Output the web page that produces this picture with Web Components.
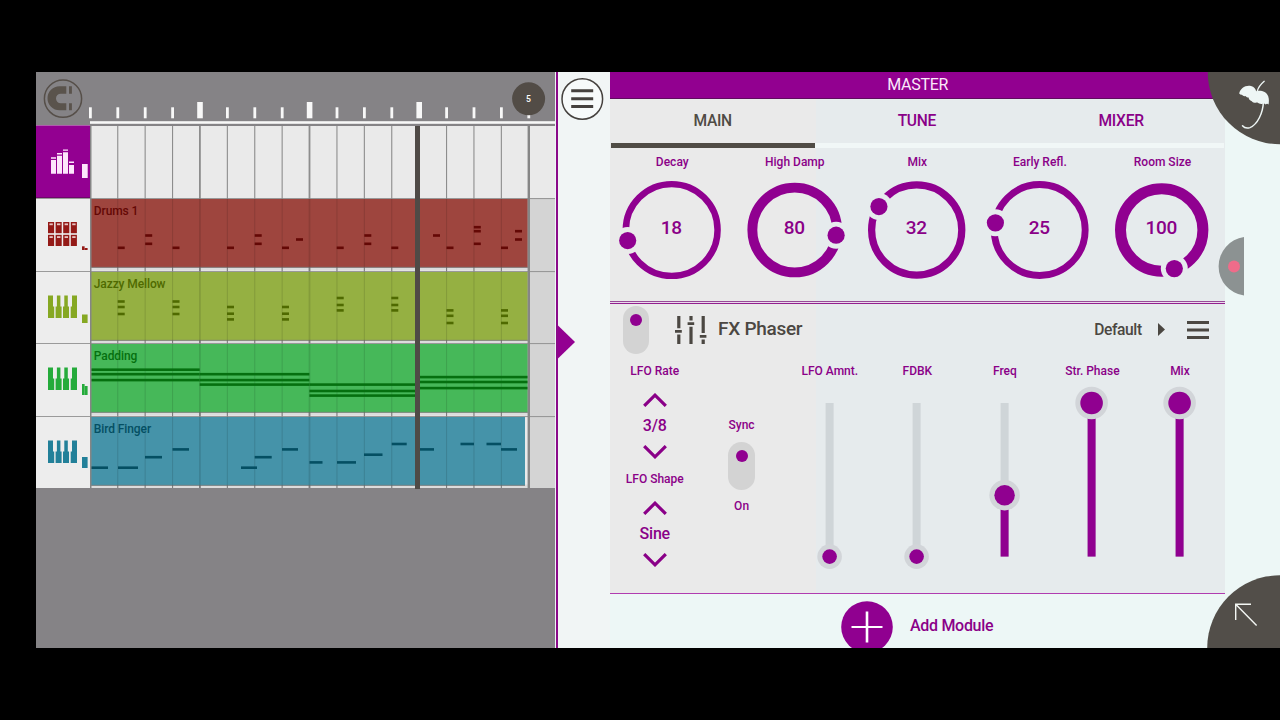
<!DOCTYPE html>
<html lang="en">
<head>
<meta charset="utf-8">
<title>Sequencer</title>
<style>
  body {
    margin: 0;
    background: #000;
    font-family: Roboto, "Liberation Sans", sans-serif;
    overflow: hidden;
  }
</style>
</head>
<body>
<daw-app></daw-app>

<script>
const BEAT = 27.4;
const ROW_HEIGHT = 72.4;

// Notes are [x, y, width] in lane pixels
const at = (x, ys, w = 7) => ys.map(y => [x, y, w]);

const TRACKS = [
  {
    name: 'Drums 1', icon: 'pads', color: '#9e453e', ink: '#640805', accent: '#941a17', end: 437.8,
    meter: [[0, 48.3, 2.6, 3.7], [2.6, 50, 3, 2]],
    notes: [
      ...at(27.7, [49.8]), ...at(55.2, [37.5, 45.8]), ...at(82.5, [49.8]), ...at(137, [49.8]),
      ...at(164.7, [37.5, 45.8]), ...at(192, [49.8]), ...at(206, [41.5]), ...at(246.7, [49.8]),
      ...at(274.3, [37.5, 45.8]), ...at(301.3, [49.8]), ...at(343, [37.5]), ...at(356.5, [49.8]),
      ...at(383.8, [29.2, 33.2, 45.8]), ...at(411, [49.8]), ...at(425, [33.2, 41.5])
    ]
  },
  {
    name: 'Jazzy Mellow', icon: 'keys', color: '#95b042', ink: '#4f6a00', accent: '#86a823', end: 437.8,
    meter: [[0, 43.5, 5.6, 8.5]],
    notes: [
      ...at(27.7, [30.5, 36, 43]), ...at(82.5, [30.5, 36, 43]),
      ...at(137, [36, 42.7, 48.4]), ...at(192, [36, 42.7, 48.4]),
      ...at(246.7, [27, 34, 39.4]), ...at(301.3, [27, 34, 39.4]),
      ...at(356.5, [39.4, 44.8, 52]), ...at(411, [39.4, 44.8, 52])
    ]
  },
  {
    name: 'Padding', icon: 'keys', color: '#46b859', ink: '#05700f', accent: '#25ab3b', end: 437.8,
    meter: [[0, 41, 2.6, 11], [2.6, 43, 3, 9]],
    notes: [
      ...at(0, [26.7, 31.2, 37.1], 109.7), ...at(109.7, [31.2, 37.1, 41.6], 109.7),
      ...at(219.4, [41.6, 48, 52.6], 106), ...at(330, [34.1, 39, 45.1], 107.8)
    ]
  },
  {
    name: 'Bird Finger', icon: 'keys', color: '#4593a9', ink: '#044f63', accent: '#228099', end: 435,
    meter: [[0, 41, 5.6, 11]],
    notes: [
      [0, 51.7, 18], [28, 51.7, 20], [55, 41.2, 17], [82.5, 33.4, 16.5], [151, 51.7, 16],
      [164.7, 41.2, 17], [192, 33.4, 16], [219.5, 46.4, 13], [247, 46.4, 19], [274, 38.7, 18.5],
      [301.7, 28, 15], [329.5, 33.4, 14.5], [370.5, 28, 13.5], [396.5, 28, 14.5], [411, 33.4, 16]
    ]
  }
];

const ICONS = {
  mixer: `
    <path fill="#fde6fb" d="M15 34h5v13.7h-5zM21 29.7h5v18h-5zM27 26.3h5v21.4h-5zM33 39h5v8.7h-5zM15 31.3h5v1.4h-5zM21 27h5v1.4h-5zM27 23.4h5v1.4h-5zM33 35.6h5v1.4h-5z"/>`,
  pads: [0, 1].map(row => [0, 1, 2, 3].map(col => {
    const x = 12 + col * 7.6;
    const y = 24 + row * 12.8;
    return `<rect x="${x}" y="${y}" width="6.1" height="11.2"/><rect x="${x + 1.4}" y="${y + 1.4}" width="3.4" height="1.8" fill="#e8c4c2"/>`;
  }).join('')).join(''),
  keys: '<path d="M12 24.5h5v11h1.2v11.6H12zM20.9 24.5h3.5v11h1.2v11.6h-6v-11.6h1.3zM28.3 24.5h3.5v11H33v11.6h-6v-11.6h1.3zM36 24.5h5v22.6h-6.3v-11.6H36z"/>'
};

class DawComponent extends HTMLElement {
  constructor() {
    super();
    this.attachShadow({ mode: 'open' });
  }

  connectedCallback() {
    this.shadowRoot.innerHTML = this.template();
  }
}

/** Timeline ruler: short tick per beat, tall tick per bar, loop end marker */
class TimeRuler extends DawComponent {
  template() {
    let ticks = '';
    for (let i = 0; i <= 16; i++) {
      const x = 54.4 + i * BEAT;
      const bar = i % 4 === 0 && i > 0 && i < 16;
      ticks += bar
        ? `<rect x="${x - 2.8}" y="30" width="5.6" height="16.3"/>`
        : `<rect x="${x - 1.4}" y="35.3" width="2.8" height="11"/>`;
    }
    return `
      <style>
        :host { display: block; height: 54px; }
        svg { display: block; }
      </style>
      <svg width="519" height="54">
        <g fill="#f8f8f8">${ticks}<rect x="54" y="49.2" width="465" height="2.6"/></g>
        <rect x="0" y="53" width="54" height="1" fill="#b05cae"/>
        <circle cx="27" cy="26.7" r="18.6" fill="none" stroke="#564f49" stroke-width="1.5"/>
        <path fill="#5a534c" d="M30.3 14.3v7.4h-5.5a4.8 4.8 0 0 0 0 9.6h5.5v7H23.5a12 12 0 0 1 0-24zM33 14.3h2.9v7.4H33zM33 31.3h2.9v7H33z"/>
        <circle cx="492.6" cy="26.8" r="16.5" fill="#524c46"/>
        <text x="492.4" y="29.7" text-anchor="middle" font-size="8.6" font-weight="500" fill="#fff">5</text>
      </svg>`;
  }
}

class TrackRow extends DawComponent {
  template() {
    const track = this.track;
    let lines = '';
    for (let i = 1; i < 16; i++) {
      const bar = i % 4 === 0;
      lines += `<rect x="${i * BEAT + (bar ? -0.6 : -0.2)}" y="0" width="${bar ? 1.8 : 1.1}" height="73"/>`;
    }
    const clip = track ? `
      <rect x="439" y="0" width="26" height="73" fill="#d4d4d4"/>
      <rect x="1" y="68.5" width="438" height="4" fill="#dcdcdc"/>` : '';
    const clipBody = track ? `
      <rect x="1" y="1" width="${track.end - 1}" height="68.5" fill="${track.color}"/>
      <rect x="1" y="68.8" width="${track.end - 1}" height="1.2" fill="#777" opacity="0.7"/>
      <g fill="#000" opacity="0.11">${lines}</g>
      <g fill="${track.ink}">${track.notes.map(([x, y, w]) => `<rect x="${x}" y="${y - 1.3}" width="${w}" height="2.6"/>`).join('')}</g>
      <text x="3.8" y="17.2" font-size="12" font-weight="500" letter-spacing="-0.1" fill="${track.ink}">${track.name}</text>` : '';
    const meter = track ? track.meter : [[0, 38, 5.7, 14]];

    return `
      <style>
        :host { display: flex; height: ${ROW_HEIGHT}px; }
        svg { display: block; flex: none; overflow: hidden; }
        .head { background: ${track ? '#ededed' : '#930091'}; }
        .lane { background: #eaeaea; }
      </style>
      <svg class="head" width="54" height="${ROW_HEIGHT}" fill="${track ? track.accent : '#fde6fb'}">
        ${ICONS[track ? track.icon : 'mixer']}
        <g transform="translate(46 0)">${meter.map(([x, y, w, h]) => `<rect x="${x}" y="${y}" width="${w}" height="${h}"/>`).join('')}</g>
        ${track ? '<rect width="54" height="1" fill="#9a9a9a"/>' : '<rect y="71.4" width="54" height="1" fill="#55104f"/>'}
      </svg>
      <svg class="lane" width="465" height="${ROW_HEIGHT}">
        ${clip}
        <g fill="#8d8d8d">${lines}</g>
        ${track ? '<rect width="465" height="1.1" fill="#989898"/>' : ''}
        ${clipBody}
        <rect x="0" y="0" width="1.5" height="73" fill="#858585"/>
        <rect x="437.6" y="0" width="2.4" height="73" fill="#868686"/>
      </svg>`;
  }
}

class SongEditor extends DawComponent {
  template() {
    return `
      <style>
        :host {
          display: block;
          position: relative;
          width: 519px;
          background: #858386;
        }
        .playhead {
          position: absolute;
          left: 379px;
          top: 54px;
          width: 5px;
          height: 362.5px;
          background: #4f4a46;
        }
      </style>
      <time-ruler></time-ruler>
      <div id="tracks"></div>
      <div class="playhead"></div>`;
  }

  connectedCallback() {
    super.connectedCallback();
    const list = this.shadowRoot.getElementById('tracks');
    [null, ...TRACKS].forEach(track => {
      const row = document.createElement('track-row');
      row.track = track;
      list.appendChild(row);
    });
  }
}

class SideRail extends DawComponent {
  template() {
    return `
      <style>
        :host {
          display: block;
          box-sizing: border-box;
          width: 54px;
          border-left: 2px solid #8b0a89;
          background: #f1f5f5;
          margin-left: 1px;
        }
        svg { display: block; }
      </style>
      <svg width="52" height="576">
        <circle cx="24.3" cy="27" r="20.3" fill="#f7fafa" stroke="#45413e" stroke-width="1.5"/>
        <path fill="#45413e" d="M13.2 17.3h22v3H13.2zM13.2 25.2h22v3H13.2zM13.2 33h22v3H13.2z"/>
        <path fill="#930091" d="M-1 252.5L17 270L-1 287.5z"/>
      </svg>`;
  }
}

/** Round dial, the ring gets thicker and smaller as the value goes up */
class DialKnob extends DawComponent {
  template() {
    const value = Number(this.getAttribute('value'));
    const stroke = 5.5 + value * 0.055;
    const radius = 46.9 - value * 0.057;
    const angle = (18.3 + value * 3.236) * Math.PI / 180;
    const x = 51.7 - Math.sin(angle) * (radius - 0.6);
    const y = 52 + Math.cos(angle) * (radius - 0.6);

    return `
      <style>
        :host {
          display: flex;
          flex-direction: column;
          align-items: center;
          color: #8a0088;
          font-weight: 500;
        }
        .label { font-size: 12px; line-height: 14px; }
        svg { display: block; margin-top: 8.6px; overflow: visible; }
      </style>
      <div class="label"><slot></slot></div>
      <svg width="104" height="104">
        <mask id="cut">
          <rect x="-5" y="-5" width="114" height="114" fill="#fff"/>
          <circle cx="${x}" cy="${y}" r="13.5" fill="#000"/>
        </mask>
        <circle cx="51.7" cy="52" r="${radius}" fill="none" stroke="#900090" stroke-width="${stroke}" mask="url(#cut)"/>
        <circle cx="${x}" cy="${y}" r="8.6" fill="#900090"/>
        <text x="51.2" y="56.4" text-anchor="middle" font-size="19" letter-spacing="-0.4" fill="#8a0088">${value}</text>
      </svg>`;
  }
}

class PillToggle extends DawComponent {
  template() {
    return `
      <style>
        :host {
          display: block;
          box-sizing: border-box;
          width: 26.6px;
          height: 48px;
          border-radius: 13.3px;
          background: #d3d3d3;
          padding: 7.6px 7.3px;
        }
        i {
          display: block;
          width: 12px;
          height: 12px;
          border-radius: 50%;
          background: #900090;
        }
      </style>
      <i></i>`;
  }
}

class ValueStepper extends DawComponent {
  template() {
    return `
      <style>
        :host {
          display: flex;
          flex-direction: column;
          align-items: center;
          height: 108.2px;
          color: #8a0088;
          font-weight: 500;
        }
        .label { font-size: 12px; line-height: 14px; }
        .value { font-size: 16px; line-height: 20px; margin: 8.4px 0 9.6px; letter-spacing: -0.2px; }
        svg { display: block; fill: none; stroke: #8a0088; stroke-width: 3.2; }
        .up { margin-top: 15.2px; }
      </style>
      <div class="label"><slot></slot></div>
      <svg class="up" width="24" height="14"><path d="M1.2 12.9L12 2.2L22.8 12.9"/></svg>
      <div class="value">${this.getAttribute('value')}</div>
      <svg width="24" height="14"><path d="M1.2 1.1L12 11.8L22.8 1.1"/></svg>`;
  }
}

class FaderSlider extends DawComponent {
  template() {
    const value = Number(this.getAttribute('value'));
    const grow = Math.cbrt(value) * 4;
    const y = 17 + (1 - value) * 153.6;

    return `
      <style>
        :host {
          display: flex;
          flex-direction: column;
          align-items: center;
          color: #8a0088;
        }
        .label { font-size: 12px; font-weight: 500; line-height: 14px; }
        svg { display: block; margin-top: 8px; }
      </style>
      <div class="label"><slot></slot></div>
      <svg width="40" height="190">
        <rect x="15.6" y="17" width="8" height="153.6" fill="#cfd5d8"/>
        <rect x="15.6" y="${y}" width="8" height="${170.6 - y}" fill="#900090"/>
        <circle cx="19.6" cy="${y}" r="${12.3 + grow}" fill="#d2d5d9"/>
        <circle cx="19.6" cy="${y}" r="${7.3 + grow}" fill="#900090"/>
      </svg>`;
  }
}

class TabStrip extends DawComponent {
  template() {
    return `
      <style>
        :host {
          display: grid;
          grid-template-columns: repeat(3, 1fr);
          height: 49px;
        }
        ::slotted(span) {
          box-sizing: border-box;
          border-bottom: 5px solid #f1f7f7;
          color: #8a0088;
          font-size: 15.6px;
          font-weight: 500;
          letter-spacing: -0.3px;
          line-height: 44px;
          padding-right: 1px;
          text-align: center;
        }
        ::slotted(.active) {
          border-bottom-color: #504c45;
          color: #504c45;
        }
      </style>
      <slot></slot>`;
  }
}

class FxModule extends DawComponent {
  template() {
    return `
      <style>
        :host { display: block; box-sizing: border-box; height: 289px; padding-top: 2px; }
        header {
          display: flex;
          align-items: center;
          height: 48px;
          padding: 0 15px 0 11.5px;
          color: #4b4742;
          font-weight: 500;
        }
        svg { display: block; flex: none; }
        .icon { margin: 0 11.5px 0 25.5px; }
        h2 { flex: 1; margin: 0; font-size: 19px; font-weight: 500; letter-spacing: -0.3px; line-height: 46px; height: 48px; }
        .preset { font-size: 15.6px; letter-spacing: -0.4px; line-height: 48px; height: 48px; }
        .next { margin: -1px 22px 0 16px; }
        .menu { margin-top: -0.6px; }
        .params {
          display: grid;
          grid-template-columns: repeat(7, 1fr);
          padding-top: 10px;
        }
        .sync {
          display: flex;
          flex-direction: column;
          align-items: center;
          padding: 54px 1.4px 0 0;
          color: #8a0088;
          font-size: 12px;
          font-weight: 500;
          line-height: 14px;
        }
        .sync pill-toggle { margin: 10px 0 9px; }
      </style>
      <header>
        <pill-toggle></pill-toggle>
        <svg class="icon" width="32" height="28" fill="#4b4742">
          <path d="M2.2 0h3.2v12.3H2.2zM0 14h6.8v2.8H0zM2.2 18.6h3.2V28H2.2zM14.4 0h3.2v4.4h-3.2zM12.6 6.2h6.6v2.8h-6.6zM14.4 10.8h3.2V28h-3.2zM26.6 0h3.2v17h-3.2zM24.8 19h6.6v2.8h-6.6zM26.6 23.6h3.2V28h-3.2z"/>
        </svg>
        <h2><slot name="title"></slot></h2>
        <span class="preset"><slot name="preset"></slot></span>
        <svg class="next" width="7" height="13" fill="#4b4742"><path d="M0 0l7 6.5L0 13z"/></svg>
        <svg class="menu" width="22" height="18" fill="#4b4742"><path d="M0 0h22v3H0zM0 7.5h22v3H0zM0 15h22v3H0z"/></svg>
      </header>
      <div class="params">
        <div>
          <value-stepper value="3/8">LFO Rate</value-stepper>
          <value-stepper value="Sine">LFO Shape</value-stepper>
        </div>
        <div class="sync">Sync<pill-toggle></pill-toggle>On</div>
        <fader-slider value="0">LFO Amnt.</fader-slider>
        <fader-slider value="0">FDBK</fader-slider>
        <fader-slider value="0.4">Freq</fader-slider>
        <fader-slider value="1">Str. Phase</fader-slider>
        <fader-slider value="1">Mix</fader-slider>
      </div>`;
  }
}

class ModuleRack extends DawComponent {
  template() {
    return `
      <style>
        :host { display: block; width: 615.3px; }
        h1 {
          box-sizing: border-box;
          height: 27px;
          margin: 0;
          background: #920090;
          border-bottom: 1px solid #5f0d5e;
          color: #fbe9fa;
          font-size: 16px;
          font-weight: 400;
          letter-spacing: -0.3px;
          line-height: 25px;
          text-align: center;
        }
        .panel {
          background: linear-gradient(90deg, #eaeaea 0 206px, #e6ebed 206px);
          padding: 0 1.6px 0 1px;
        }
        .dials {
          box-sizing: border-box;
          display: grid;
          grid-template-columns: repeat(5, 1fr);
          height: 153px;
          padding-top: 7px;
        }
        .dials dial-knob { min-width: 0; }
        .rule {
          height: 1px;
          border-top: 1px solid #984a97;
          border-bottom: 1px solid #93208f;
          background: #eadcec;
        }
        .end { height: 1px; background: #b03cb0; }
        .add {
          display: flex;
          align-items: center;
          gap: 17px;
          padding: 6.5px 0 0 231px;
          color: #8a0088;
          font-size: 16px;
          font-weight: 500;
          letter-spacing: -0.3px;
        }
        .add svg { display: block; }
        .add span { padding-bottom: 2px; }
      </style>
      <h1>MASTER</h1>
      <div class="panel">
        <tab-strip><span class="active">MAIN</span><span>TUNE</span><span>MIXER</span></tab-strip>
        <div class="dials">
          <dial-knob value="18">Decay</dial-knob>
          <dial-knob value="80">High Damp</dial-knob>
          <dial-knob value="32">Mix</dial-knob>
          <dial-knob value="25">Early Refl.</dial-knob>
          <dial-knob value="100">Room Size</dial-knob>
        </div>
      </div>
      <div class="rule"></div>
      <div class="panel">
        <fx-module><span slot="title">FX Phaser</span><span slot="preset">Default</span></fx-module>
      </div>
      <div class="end"></div>
      <div class="add">
        <svg width="52" height="52">
          <circle cx="26" cy="26" r="25.8" fill="#900090"/>
          <path fill="#fff" d="M24.7 10.5h2.6v31h-2.6zM10.5 25h31v2h-31z"/>
        </svg>
        <span>Add Module</span>
      </div>`;
  }
}

/** Dark quarter discs in the corners and the floating record handle */
class CornerControls extends DawComponent {
  template() {
    return `
      <style>
        :host { position: absolute; top: 0; right: 0; width: 73px; height: 576px; }
        svg { display: block; }
      </style>
      <svg width="73" height="576">
        <circle cx="73" cy="0" r="72.3" fill="#524e49"/>
        <g fill="none" stroke="#eef6f5" stroke-linecap="round">
          <path stroke-width="1.3" d="M57.2 9.3C54 12 51.5 15 50.3 19"/>
          <path stroke-width="1.5" d="M56.4 30C56 41 50.5 52.5 43 55.6C40 56.6 37 55.6 35.5 53.8"/>
        </g>
        <path fill="#eef6f5" d="M32.2 21.6C33 16.5 38.5 12.8 44 14C47 14.8 48.6 17 49.2 19.2C54 18 59.5 19.8 61.2 24.2C62.2 27 62 30 61.6 32.4C60.4 31.4 59.6 31.6 58.6 32.4C57.6 31.2 56.4 31.2 55.2 31.9C53.4 32.2 51.6 31.6 50.4 30.6C48 31 45.8 30.6 44.8 29.2C42.8 28.8 41.8 27.4 41.6 25.6C40.4 25.6 39.4 25 38.6 24C37.2 24.6 35.8 23.8 34.9 22.8C34 23 33 22.6 32.2 21.6z"/>
        <path fill="#8c9292" d="M37 165a29.6 29.6 0 0 0 0 58.6z"/>
        <circle cx="27" cy="194.5" r="6" fill="#ef6c8a"/>
        <circle cx="73" cy="576" r="72.8" fill="#524e49"/>
        <path fill="none" stroke="#f4f7f4" stroke-width="1.4" d="M28.7 548V532.3H44M28.7 532.3L49.6 553.5"/>
      </svg>`;
  }
}

class DawApp extends DawComponent {
  template() {
    return `
      <style>
        :host {
          display: flex;
          position: relative;
          width: 1244px;
          height: 576px;
          margin: 72px 0 72px 36px;
          background: #edf7f6;
          overflow: hidden;
        }
        song-editor, side-rail, module-rack { flex: none; }
      </style>
      <song-editor></song-editor>
      <side-rail></side-rail>
      <module-rack></module-rack>
      <corner-controls></corner-controls>`;
  }
}

customElements.define('time-ruler', TimeRuler);
customElements.define('track-row', TrackRow);
customElements.define('song-editor', SongEditor);
customElements.define('side-rail', SideRail);
customElements.define('dial-knob', DialKnob);
customElements.define('pill-toggle', PillToggle);
customElements.define('value-stepper', ValueStepper);
customElements.define('fader-slider', FaderSlider);
customElements.define('tab-strip', TabStrip);
customElements.define('fx-module', FxModule);
customElements.define('module-rack', ModuleRack);
customElements.define('corner-controls', CornerControls);
customElements.define('daw-app', DawApp);
</script>
</body>
</html>
